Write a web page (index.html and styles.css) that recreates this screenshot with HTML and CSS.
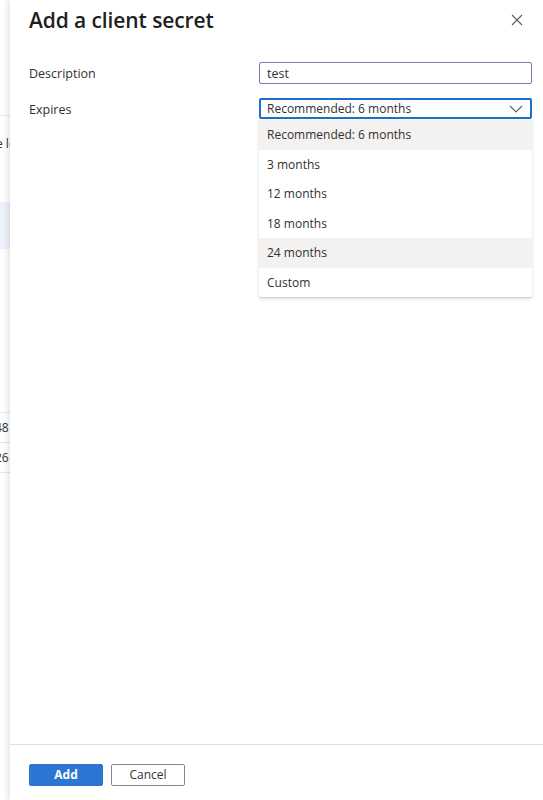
FILE: index.html
```html
<!DOCTYPE html>
<html>
<head>
<meta charset="utf-8">
<link rel="stylesheet" href="styles.css">
</head>
<body>
<div class="page">
  <div class="behind">
    <div class="behind-line l1"></div>
    <div class="behind-text t1">e lo</div>
    <div class="behind-hl"></div>
    <div class="behind-gap"></div>
    <div class="behind-row">48</div>
    <div class="behind-row">26</div>
  </div>
  <div class="panel">
    <div class="header">
      <h1 class="title">Add a client secret</h1>
      <svg class="close" width="12" height="12" viewBox="0 0 12 12"><path d="M1 1 L11 11 M11 1 L1 11" stroke="#605e5c" stroke-width="1.1" fill="none"/></svg>
    </div>
    <div class="form">
      <div class="row">
        <div class="label">Description</div>
        <div class="control"><div class="input">test</div></div>
      </div>
      <div class="row">
        <div class="label">Expires</div>
        <div class="control">
          <div class="select">
            <span>Recommended: 6 months</span>
            <svg class="chev" width="14" height="8" viewBox="0 0 14 8"><path d="M1 1 L7 7 L13 1" stroke="#605e5c" stroke-width="1.1" fill="none"/></svg>
          </div>
          <div class="menu">
            <div class="opt sel">Recommended: 6 months</div>
            <div class="opt">3 months</div>
            <div class="opt">12 months</div>
            <div class="opt">18 months</div>
            <div class="opt hov">24 months</div>
            <div class="opt">Custom</div>
          </div>
        </div>
      </div>
    </div>
    <div class="spacer"></div>
    <div class="footer">
      <button class="btn primary">Add</button>
      <button class="btn secondary">Cancel</button>
    </div>
  </div>
</div>
</body>
</html>
```

FILE: styles.css
```css
html, body {
  margin: 0;
  padding: 0;
  height: 100%;
  background: #fff;
}
body {
  font-family: "Open Sans", "Noto Sans", "Liberation Sans", sans-serif;
  color: #323130;
}
.page {
  display: flex;
  height: 800px;
  overflow: hidden;
}
.behind {
  width: 10px;
  flex: none;
  overflow: hidden;
  background: #fff;
  font-size: 12px;
  color: #323130;
  white-space: nowrap;
}
.behind-line {
  height: 1px;
  background: #e5e5e5;
}
.l1 { margin-top: 115px; }
.behind-text {
  margin-top: 19px;
  margin-left: -4px;
  line-height: 18px;
}
.behind-hl {
  margin-top: 49px;
  height: 47px;
  background: #eef2fb;
}
.behind-gap {
  height: 163px;
  border-bottom: 1px solid #e5e5e5;
}
.behind-row {
  height: 29px;
  line-height: 30px;
  margin-left: -5px;
  border-bottom: 1px solid #e5e5e5;
}
.panel {
  flex: 1;
  display: flex;
  flex-direction: column;
  background: #fff;
  box-shadow: -2px 0 6px rgba(0,0,0,0.12);
  position: relative;
  z-index: 1;
}
.header {
  display: flex;
  justify-content: space-between;
  align-items: center;
  padding: 4px 20px 0 19px;
  height: 32px;
}
.title {
  margin: 0;
  font-size: 21px;
  font-weight: 600;
  letter-spacing: -0.1px;
  color: #201f1e;
  line-height: 30px;
}
.form {
  display: flex;
  flex-direction: column;
  gap: 15px;
  padding: 26px 11px 0 19px;
}
.row {
  display: flex;
  align-items: center;
  height: 21px;
}
.label {
  width: 230px;
  font-size: 12.5px;
  color: #323130;
  padding-top: 2px;
}
.control {
  flex: 1;
  position: relative;
}
.input {
  height: 20px;
  border: 1px solid #8f6cc0;
  border-radius: 2px;
  font-size: 12.5px;
  line-height: 21px;
  padding: 0 7px;
}
.select {
  height: 17px;
  border: 2px solid #1a6fd1;
  border-radius: 2px;
  font-size: 12px;
  line-height: 18px;
  padding: 0 6px;
  display: flex;
  justify-content: space-between;
  align-items: center;
}
.chev { margin-right: 1px; }
.menu {
  position: absolute;
  left: 0;
  right: 0;
  top: 22px;
  background: #fff;
  box-shadow: 0 1.6px 3.6px rgba(0,0,0,0.13), 0 0.3px 0.9px rgba(0,0,0,0.11);
  border-radius: 0 0 2px 2px;
}
.opt {
  height: 29.5px;
  line-height: 29.5px;
  padding: 0 8px;
  font-size: 12px;
  color: #323130;
}
.opt.sel, .opt.hov { background: #f3f2f1; }
.spacer { flex: 1; }
.footer {
  border-top: 1px solid #e1dfdd;
  padding: 19px 19px 14px;
  display: flex;
  gap: 8px;
}
.btn {
  font-family: "Open Sans", "Noto Sans", sans-serif;
  height: 22px;
  width: 74px;
  font-size: 12px;
  border-radius: 2px;
  padding: 0;
  line-height: 20px;
}
.primary {
  background: #2b76d2;
  border: 1px solid #2b76d2;
  color: #fff;
  font-weight: 700;
}
.secondary {
  background: #fff;
  border: 1px solid #8a8886;
  color: #323130;
}
```
